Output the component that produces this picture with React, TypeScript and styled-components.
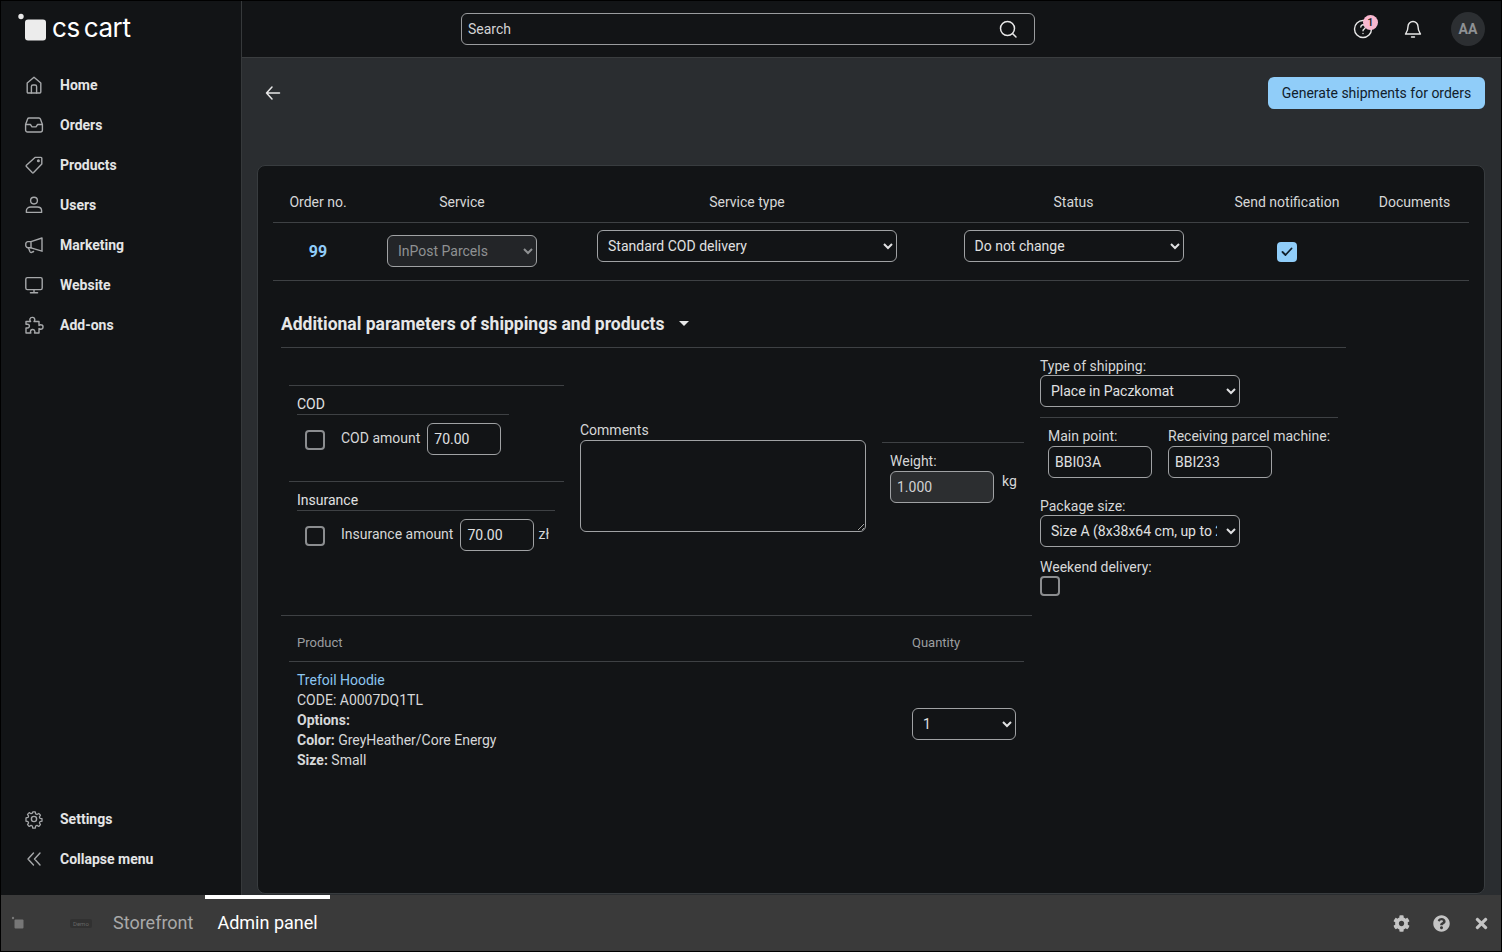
import React from 'react';
import styled, { createGlobalStyle } from 'styled-components';
import { FaCog, FaQuestionCircle, FaTimes } from 'react-icons/fa';

const GlobalStyle = createGlobalStyle`
	* {
		box-sizing: border-box;
	}
	html, body {
		margin: 0;
		padding: 0;
		background: #000;
		color-scheme: dark;
	}
	body {
		color: #e0e1e2;
		font-family: Roboto, "Liberation Sans", sans-serif;
		font-size: 14px;
	}
`;

const Page = styled.div`
	display: flex;
	flex-direction: column;
	height: 952px;
	overflow: hidden;
	padding: 1px 1px 1px 1px;
	width: 1502px;
`;

const Main = styled.div`
	display: flex;
	flex: 1;
	min-height: 0;
`;

const Sidebar = styled.aside`
	background: #121416;
	border-right: 1px solid #36393b;
	display: flex;
	flex-direction: column;
	flex-shrink: 0;
	width: 241px;
`;

const LogoRow = styled.div`
	align-items: flex-start;
	display: flex;
	height: 64px;
	padding: 12px 0 0 17px;
`;

const LogoMark = styled.svg`
	flex-shrink: 0;
	height: 28px;
	width: 29px;
`;

const LogoText = styled.span`
	color: #fff;
	font-family: Inter, Roboto, sans-serif;
	font-size: 26px;
	font-weight: 400;
	letter-spacing: -0.4px;
	line-height: 30px;
	margin-left: 5px;
	word-spacing: -3px;
`;

const Nav = styled.nav`
	display: flex;
	flex-direction: column;
	flex: 1;
`;

const NavBottom = styled.div`
	display: flex;
	flex-direction: column;
	margin-bottom: 16px;
	margin-top: auto;
`;

const NavItem = styled.a`
	align-items: center;
	color: #e4e5e6;
	display: flex;
	font-size: 14px;
	font-weight: 700;
	height: 40px;
	padding-left: 23px;
`;

const NavIcon = styled.svg`
	fill: none;
	flex-shrink: 0;
	height: 20px;
	margin-right: 16px;
	stroke: #a6a8aa;
	stroke-linecap: round;
	stroke-linejoin: round;
	stroke-width: 1.4;
	width: 20px;
`;

const Column = styled.div`
	display: flex;
	flex: 1;
	flex-direction: column;
	min-width: 0;
`;

const Topbar = styled.header`
	align-items: center;
	background: #121416;
	border-bottom: 1px solid #3a3d3f;
	display: flex;
	flex-shrink: 0;
	height: 57px;
	padding: 0 16px 1px 219px;
`;

const SearchBox = styled.div`
	align-items: center;
	border: 1px solid #9a9c9e;
	border-radius: 6px;
	display: flex;
	height: 32px;
	justify-content: space-between;
	padding: 0 16px 0 6px;
	width: 574px;
`;

const SearchPlaceholder = styled.span`
	color: #d2d3d4;
	font-size: 14px;
`;

const TopIcons = styled.div`
	align-items: center;
	display: flex;
	margin-left: auto;
`;

const TopIcon = styled.div`
	display: flex;
	height: 20px;
	margin-left: 30px;
	position: relative;
	width: 20px;
`;

const Badge = styled.span`
	background: #f9b8d0;
	border-radius: 50%;
	color: #1a1a1a;
	font-size: 11px;
	font-weight: 500;
	height: 15px;
	left: 10px;
	line-height: 15px;
	position: absolute;
	text-align: center;
	top: -4px;
	width: 15px;
`;

const Avatar = styled.div`
	align-items: center;
	background: #2c2f32;
	border-radius: 50%;
	color: #8e9194;
	display: flex;
	font-size: 14px;
	font-weight: 700;
	height: 34px;
	justify-content: center;
	margin-left: 28px;
	width: 34px;
`;

const Content = styled.main`
	background: #2a2d30;
	display: flex;
	flex: 1;
	flex-direction: column;
	min-height: 0;
	padding: 0 16px 1px 15px;
`;

const ActionBar = styled.div`
	align-items: flex-start;
	display: flex;
	flex-shrink: 0;
	height: 107px;
	justify-content: space-between;
	padding: 19px 0 0 8px;
`;

const BackButton = styled.div`
	align-items: center;
	display: flex;
	height: 32px;
`;

const PrimaryButton = styled.button`
	background: #90cdf9;
	border: 0;
	border-radius: 6px;
	color: #10202c;
	font-family: inherit;
	font-size: 14px;
	height: 32px;
	padding: 0;
	width: 217px;
`;

const Card = styled.section`
	background: #121416;
	border: 1px solid #383c3f;
	border-radius: 8px;
	flex: 1;
	min-height: 0;
	padding: 21px 15px 0;
`;

const ORDER_COLUMNS = '90px 198px 372px 281px 146px 109px';

const OrderHead = styled.div`
	border-bottom: 1px solid #3e4144;
	display: grid;
	grid-template-columns: ${ORDER_COLUMNS};
	height: 36px;
`;

const HeadCell = styled.div`
	color: #d6d7d8;
	line-height: 30px;
	text-align: center;
`;

const OrderRow = styled.div`
	align-items: center;
	border-bottom: 1px solid #3e4144;
	display: grid;
	grid-template-columns: ${ORDER_COLUMNS};
	height: 58px;
`;

const OrderCell = styled.div<{ $lift?: number }>`
	display: flex;
	justify-content: center;
	margin-bottom: ${(props) => props.$lift ?? 0}px;
`;

const OrderLink = styled.a`
	color: #90cdf9;
	font-size: 16px;
	font-weight: 700;
`;

const Select = styled.select<{ $width: number }>`
	background-color: ${(props) => (props.disabled ? '#232528' : '#121416')};
	border: 1px solid #a0a2a4;
	border-radius: 6px;
	color: ${(props) => (props.disabled ? '#8f9193' : '#e0e1e2')};
	font-family: inherit;
	font-size: 14px;
	height: 32px;
	opacity: 1;
	padding: 0 6px;
	width: ${(props) => props.$width}px;
`;

const QuantitySelect = styled(Select)`
	margin-top: 8px;
`;

const NativeCheck = styled.div<{ $checked?: boolean }>`
	align-items: center;
	background: ${(props) => (props.$checked ? '#90cdf9' : 'transparent')};
	border: ${(props) => (props.$checked ? '0' : '2px solid #8b8d8f')};
	border-radius: 4px;
	display: flex;
	flex-shrink: 0;
	height: 20px;
	justify-content: center;
	width: 20px;
`;

const AmountCheck = styled(NativeCheck)`
	margin-top: 2px;
`;

const ParamsSection = styled.div`
	margin: 0 8px;
	width: 1065px;
`;

const ParamsTitle = styled.div`
	align-items: center;
	border-bottom: 1px solid #3e4144;
	display: flex;
	height: 67px;
	padding-top: 19px;
`;

const TitleText = styled.h3`
	color: #e6e7e8;
	font-size: 17.5px;
	font-weight: 700;
	margin: 0;
`;

const Caret = styled.span`
	border-left: 5px solid transparent;
	border-right: 5px solid transparent;
	border-top: 5px solid #e6e7e8;
	height: 0;
	margin-left: 15px;
	width: 0;
`;

const ParamsBody = styled.div`
	display: flex;
`;

const LeftGroup = styled.div`
	width: 751px;
`;

const RightGroup = styled.div`
	margin-left: 8px;
	width: 306px;
`;

const TopRow = styled.div`
	border-bottom: 1px solid #3e4144;
	display: flex;
	height: 268px;
	padding-left: 8px;
`;

const AmountsColumn = styled.div`
	padding-top: 37px;
	width: 275px;
`;

const AmountGroup = styled.div`
	border-top: 1px solid #3e4144;
	height: 96px;
	padding-left: 8px;
`;

const GroupTitle = styled.div<{ $width: number }>`
	border-bottom: 1px solid #3e4144;
	height: 29px;
	line-height: 37px;
	width: ${(props) => props.$width}px;
`;

const AmountRow = styled.div`
	align-items: center;
	display: flex;
	margin-top: 8px;
	padding-left: 8px;
`;

const AmountLabel = styled.label`
	color: #d6d7d8;
	margin: 0 7px 0 16px;
	position: relative;
	top: -1px;
`;

const Unit = styled.span`
	color: #d6d7d8;
	margin-left: 4px;
	overflow: hidden;
	position: relative;
	top: -1px;
	width: 11px;
`;

const TextInput = styled.input<{ $width: number }>`
	background: ${(props) => (props.disabled ? '#2c2e30' : '#121416')};
	border: 1px solid #a0a2a4;
	border-radius: 6px;
	color: ${(props) => (props.disabled ? '#d0d1d2' : '#e0e1e2')};
	display: block;
	font-family: inherit;
	font-size: 14px;
	height: 32px;
	padding: 0 6px;
	width: ${(props) => props.$width}px;
`;

const CommentsColumn = styled.div`
	margin-left: 16px;
	padding-top: 73px;
	width: 286px;
`;

const FieldLabel = styled.label<{ $tight?: boolean }>`
	color: #d6d7d8;
	display: block;
	height: ${(props) => (props.$tight ? '18px' : '19px')};
	line-height: 19px;
`;

const Comments = styled.textarea`
	background: #121416;
	border: 1px solid #a0a2a4;
	border-radius: 6px;
	display: block;
	height: 92px;
	width: 286px;
`;

const WeightColumn = styled.div`
	margin-left: 16px;
	margin-top: 94px;
	width: 142px;
`;

const WeightInner = styled.div`
	border-top: 1px solid #3e4144;
	padding: 9px 0 0 8px;
`;

const WeightRow = styled.div`
	align-items: flex-start;
	display: flex;
`;

const WeightUnit = styled.span`
	color: #d6d7d8;
	line-height: 20px;
	margin-left: 8px;
`;

const ProductHead = styled.div`
	border-bottom: 1px solid #3e4144;
	color: #9c9ea0;
	display: grid;
	font-size: 13px;
	grid-template-columns: 615px 1fr;
	height: 46px;
	line-height: 54px;
	margin: 0 8px;
	padding-left: 8px;
`;

const ProductRow = styled.div`
	align-items: center;
	display: grid;
	grid-template-columns: 615px 1fr;
	margin: 8px 8px 0;
	padding-left: 8px;
`;

const ProductLine = styled.div`
	color: #d6d7d8;
	line-height: 20px;
`;

const ProductLink = styled.a`
	color: #8cc6f0;
`;

const Strong = styled.b`
	font-weight: 700;
`;

const RightBlock = styled.div<{ $top?: number }>`
	margin-top: ${(props) => props.$top ?? 0}px;
`;

const PointsBlock = styled.div`
	border-top: 1px solid #3e4144;
	display: flex;
	gap: 16px;
	margin-top: 10px;
	padding: 9px 0 0 8px;
	width: 298px;
`;

const Bottombar = styled.footer`
	align-items: center;
	background: #3a3a3a;
	display: flex;
	flex-shrink: 0;
	height: 56px;
	padding-right: 11px;
`;

const DemoLogo = styled.div`
	align-items: center;
	display: flex;
	opacity: 0.55;
	padding-left: 10px;
	width: 100px;
`;

const DemoBadge = styled.span`
	background: #2a2a2a;
	border-radius: 2px;
	color: #888;
	font-size: 6px;
	margin-left: 45px;
	padding: 1px 3px;
`;

const Tab = styled.a<{ $active?: boolean }>`
	border-top: 4px solid ${(props) => (props.$active ? '#fff' : 'transparent')};
	color: ${(props) => (props.$active ? '#fff' : '#a9a9a9')};
	font-size: 18px;
	height: 56px;
	line-height: 48px;
	padding: 0 12px;
	text-align: center;
`;

const BarActions = styled.div`
	align-items: center;
	color: #c4c4c4;
	display: flex;
	font-size: 17px;
	gap: 23px;
	margin-left: auto;
`;

const MENU = [
	{
		label: 'Home',
		icon: (
			<>
				<path d="M3.200 8 10 2.200 16.800 8v9a1 1 0 0 1-1 1H4.200a1 1 0 0 1-1-1Z" />
				<path d="M7.400 18v-6.400a1.600 1.600 0 0 1 1.600-1.600h2a1.600 1.600 0 0 1 1.600 1.600V18" />
			</>
		),
	},
	{
		label: 'Orders',
		icon: (
			<>
				<path d="M5 3h10a1.500 1.500 0 0 1 1.400 1l2 5.600V15a2 2 0 0 1-2 2H3.600a2 2 0 0 1-2-2V9.600l2-5.600A1.500 1.500 0 0 1 5 3Z" />
				<path d="M1.800 9.500h4.600l1.600 2.400h4l1.600-2.400h4.600" />
			</>
		),
	},
	{
		label: 'Products',
		icon: (
			<>
				<path d="M11 2.400h6a.8.8 0 0 1 .8.8V9L9.600 17.600a1 1 0 0 1-1.400 0l-5.800-6a1 1 0 0 1 0-1.400Z" />
				<circle cx="14.400" cy="5.800" r="0.8" />
			</>
		),
	},
	{
		label: 'Users',
		icon: (
			<>
				<circle cx="10" cy="5.600" r="3.400" />
				<path d="M2.400 17.400v-1.800c0-2.200 2-3.600 4.400-3.600h6.400c2.400 0 4.400 1.400 4.400 3.600v1.800Z" />
			</>
		),
	},
	{
		label: 'Marketing',
		icon: (
			<>
				<path d="M18 3 7 6.600v6.200l11 3.400Z" />
				<path d="M7 6.600H3.800a2.600 2.600 0 0 0-2 3.100 2.600 2.600 0 0 0 2 3.100H7" />
				<path d="M4.400 12.800 6 16.800a1.200 1.200 0 0 0 1.600.6l2-.9" />
			</>
		),
	},
	{
		label: 'Website',
		icon: (
			<>
				<rect x="1.800" y="2.600" width="16.400" height="12" rx="1.600" />
				<path d="M10 14.600v3M6.400 17.800h7.200" />
			</>
		),
	},
	{
		label: 'Add-ons',
		icon: (
			<path d="M2 6.500h4.600c-.8-.8-1-1.600-.7-2.400.4-1.200 1.600-1.900 2.800-1.700 1.200.2 2.100 1.200 2.100 2.400 0 .7-.3 1.200-.8 1.700H15v4c.6-.5 1.200-.8 2-.7 1.200.1 2.100 1.200 2 2.400-.1 1.200-1.100 2.100-2.300 2.100-.6 0-1.200-.2-1.700-.7v4.400h-4.500c.4-.6.5-1.200.3-1.900-.3-1-1.300-1.700-2.300-1.600-1.100.1-2 1-2 2.100 0 .5.1.9.4 1.400H2v-5h1.500c1 0 1.900-.8 1.900-1.900 0-1-.9-1.900-1.900-1.900H2Z" />
		),
	},
];

function SettingsGlyph() {
	return (
		<>
			<circle cx="10" cy="10" r="2.600" />
			<path d="M8.600 2h2.800l.4 2.300 1.500.7 2-1.200 1.900 2-1.200 1.900.6 1.500 2.300.5v2.700l-2.300.5-.6 1.500 1.200 1.900-1.900 2-2-1.200-1.500.7-.4 2.300H8.600l-.4-2.300-1.500-.7-2 1.200-1.900-2 1.200-1.900-.6-1.500-2.300-.5V8.800l2.300-.5.6-1.500-1.200-1.900 1.900-2 2 1.200 1.500-.7Z" transform="translate(1 1) scale(.9)" />
		</>
	);
}

export default function App() {
	return (
		<Page>
			<GlobalStyle />
			<Main>
				<Sidebar>
					<LogoRow>
						<LogoMark viewBox="0 0 29 28">
							<circle cx="3" cy="3.500" r="2.700" fill="#e8e8e8" />
							<rect x="7" y="6.500" width="21" height="21" rx="3" fill="#ececec" />
						</LogoMark>
						<LogoText>cs cart</LogoText>
					</LogoRow>
					<Nav>
						{MENU.map((item) => (
							<NavItem key={item.label}>
								<NavIcon viewBox="0 0 20 20">{item.icon}</NavIcon>
								{item.label}
							</NavItem>
						))}
						<NavBottom>
							<NavItem>
								<NavIcon viewBox="0 0 20 20">
									<SettingsGlyph />
								</NavIcon>
								Settings
							</NavItem>
							<NavItem>
								<NavIcon viewBox="0 0 20 20">
									<path d="M9.500 4 4 10l5.500 6M16 4l-5.500 6 5.500 6" />
								</NavIcon>
								Collapse menu
							</NavItem>
						</NavBottom>
					</Nav>
				</Sidebar>
				<Column>
					<Topbar>
						<SearchBox>
							<SearchPlaceholder>Search</SearchPlaceholder>
							<svg width="20" height="20" viewBox="0 0 20 20" fill="none" stroke="#e8e8e8" strokeWidth="1.500" strokeLinecap="round">
								<circle cx="9.500" cy="9.500" r="7" />
								<path d="m14.500 14.500 3.500 3.500" />
							</svg>
						</SearchBox>
						<TopIcons>
							<TopIcon>
								<svg width="20" height="20" viewBox="0 0 20 20" fill="none" stroke="#e8e8e8" strokeWidth="1.400" strokeLinecap="round">
									<circle cx="10" cy="10" r="8.500" />
									<path d="M7.800 8a2.300 2.300 0 1 1 3.300 2.100c-.7.400-1.100.9-1.100 1.700" />
									<path d="M10 14.400v.1" />
								</svg>
								<Badge>1</Badge>
							</TopIcon>
							<TopIcon>
								<svg width="20" height="20" viewBox="0 0 20 20" fill="none" stroke="#e8e8e8" strokeWidth="1.400" strokeLinecap="round" strokeLinejoin="round">
									<path d="M10 2.500a5 5 0 0 0-5 5c0 4.500-2 6.500-2.500 7.500h15c-.5-1-2.500-3-2.500-7.500a5 5 0 0 0-5-5Z" />
									<path d="M8.500 18h3" />
								</svg>
							</TopIcon>
							<Avatar>AA</Avatar>
						</TopIcons>
					</Topbar>
					<Content>
						<ActionBar>
							<BackButton>
								<svg width="16" height="16" viewBox="0 0 16 16" fill="none" stroke="#e8e8e8" strokeWidth="1.500" strokeLinecap="round" strokeLinejoin="round">
									<path d="M14.500 8h-13M7 2 1.500 8 7 14" />
								</svg>
							</BackButton>
							<PrimaryButton>Generate shipments for orders</PrimaryButton>
						</ActionBar>
						<Card>
							<OrderHead>
								<HeadCell>Order no.</HeadCell>
								<HeadCell>Service</HeadCell>
								<HeadCell>Service type</HeadCell>
								<HeadCell>Status</HeadCell>
								<HeadCell>Send notification</HeadCell>
								<HeadCell>Documents</HeadCell>
							</OrderHead>
							<OrderRow>
								<OrderCell>
									<OrderLink>99</OrderLink>
								</OrderCell>
								<OrderCell $lift={2}>
									<Select $width={150} disabled>
										<option>InPost Parcels</option>
									</Select>
								</OrderCell>
								<OrderCell $lift={12}>
									<Select $width={300}>
										<option>Standard COD delivery</option>
									</Select>
								</OrderCell>
								<OrderCell $lift={12}>
									<Select $width={220}>
										<option>Do not change</option>
									</Select>
								</OrderCell>
								<OrderCell>
									<NativeCheck $checked>
										<svg width="12" height="10" viewBox="0 0 12 10" fill="none" stroke="#10202c" strokeWidth="1.800" strokeLinecap="round" strokeLinejoin="round">
											<path d="m1.500 5 3 3 6-6.500" />
										</svg>
									</NativeCheck>
								</OrderCell>
								<OrderCell />
							</OrderRow>
							<ParamsSection>
								<ParamsTitle>
									<TitleText>Additional parameters of shippings and products</TitleText>
									<Caret />
								</ParamsTitle>
								<ParamsBody>
									<LeftGroup>
										<TopRow>
											<AmountsColumn>
												<AmountGroup>
													<GroupTitle $width={212}>COD</GroupTitle>
													<AmountRow>
														<AmountCheck />
														<AmountLabel>COD amount</AmountLabel>
														<TextInput $width={74} defaultValue="70.00" />
													</AmountRow>
												</AmountGroup>
												<AmountGroup>
													<GroupTitle $width={258}>Insurance</GroupTitle>
													<AmountRow>
														<AmountCheck />
														<AmountLabel>Insurance amount</AmountLabel>
														<TextInput $width={74} defaultValue="70.00" />
														<Unit>zł</Unit>
													</AmountRow>
												</AmountGroup>
											</AmountsColumn>
											<CommentsColumn>
												<FieldLabel>Comments</FieldLabel>
												<Comments />
											</CommentsColumn>
											<WeightColumn>
												<WeightInner>
													<FieldLabel>Weight:</FieldLabel>
													<WeightRow>
														<TextInput $width={104} disabled defaultValue="1.000" />
														<WeightUnit>kg</WeightUnit>
													</WeightRow>
												</WeightInner>
											</WeightColumn>
										</TopRow>
										<ProductHead>
											<span>Product</span>
											<span>Quantity</span>
										</ProductHead>
										<ProductRow>
											<div>
												<ProductLine>
													<ProductLink>Trefoil Hoodie</ProductLink>
												</ProductLine>
												<ProductLine>CODE: A0007DQ1TL</ProductLine>
												<ProductLine>
													<Strong>Options:</Strong>
												</ProductLine>
												<ProductLine>
													<Strong>Color:</Strong> GreyHeather/Core Energy
												</ProductLine>
												<ProductLine>
													<Strong>Size:</Strong> Small
												</ProductLine>
											</div>
											<QuantitySelect $width={104}>
												<option>1</option>
											</QuantitySelect>
										</ProductRow>
									</LeftGroup>
									<RightGroup>
										<RightBlock $top={9}>
											<FieldLabel $tight>Type of shipping:</FieldLabel>
											<Select $width={200}>
												<option>Place in Paczkomat</option>
											</Select>
										</RightBlock>
										<PointsBlock>
											<div>
												<FieldLabel>Main point:</FieldLabel>
												<TextInput $width={104} defaultValue="BBI03A" />
											</div>
											<div>
												<FieldLabel>Receiving parcel machine:</FieldLabel>
												<TextInput $width={104} defaultValue="BBI233" />
											</div>
										</PointsBlock>
										<RightBlock $top={19}>
											<FieldLabel $tight>Package size:</FieldLabel>
											<Select $width={200}>
												<option>Size A (8x38x64 cm, up to 25 kg)</option>
											</Select>
										</RightBlock>
										<RightBlock $top={11}>
											<FieldLabel $tight>Weekend delivery:</FieldLabel>
											<NativeCheck />
										</RightBlock>
									</RightGroup>
								</ParamsBody>
							</ParamsSection>
						</Card>
					</Content>
				</Column>
			</Main>
			<Bottombar>
				<DemoLogo>
					<svg width="14" height="14" viewBox="0 0 14 14">
						<circle cx="2" cy="2" r="1.200" fill="#aaa" />
						<rect x="3.500" y="3.500" width="9" height="9" rx="1" fill="#aaa" />
					</svg>
					<DemoBadge>Demo</DemoBadge>
				</DemoLogo>
				<Tab>Storefront</Tab>
				<Tab $active>Admin panel</Tab>
				<BarActions>
					<FaCog />
					<FaQuestionCircle />
					<FaTimes />
				</BarActions>
			</Bottombar>
		</Page>
	);
}
